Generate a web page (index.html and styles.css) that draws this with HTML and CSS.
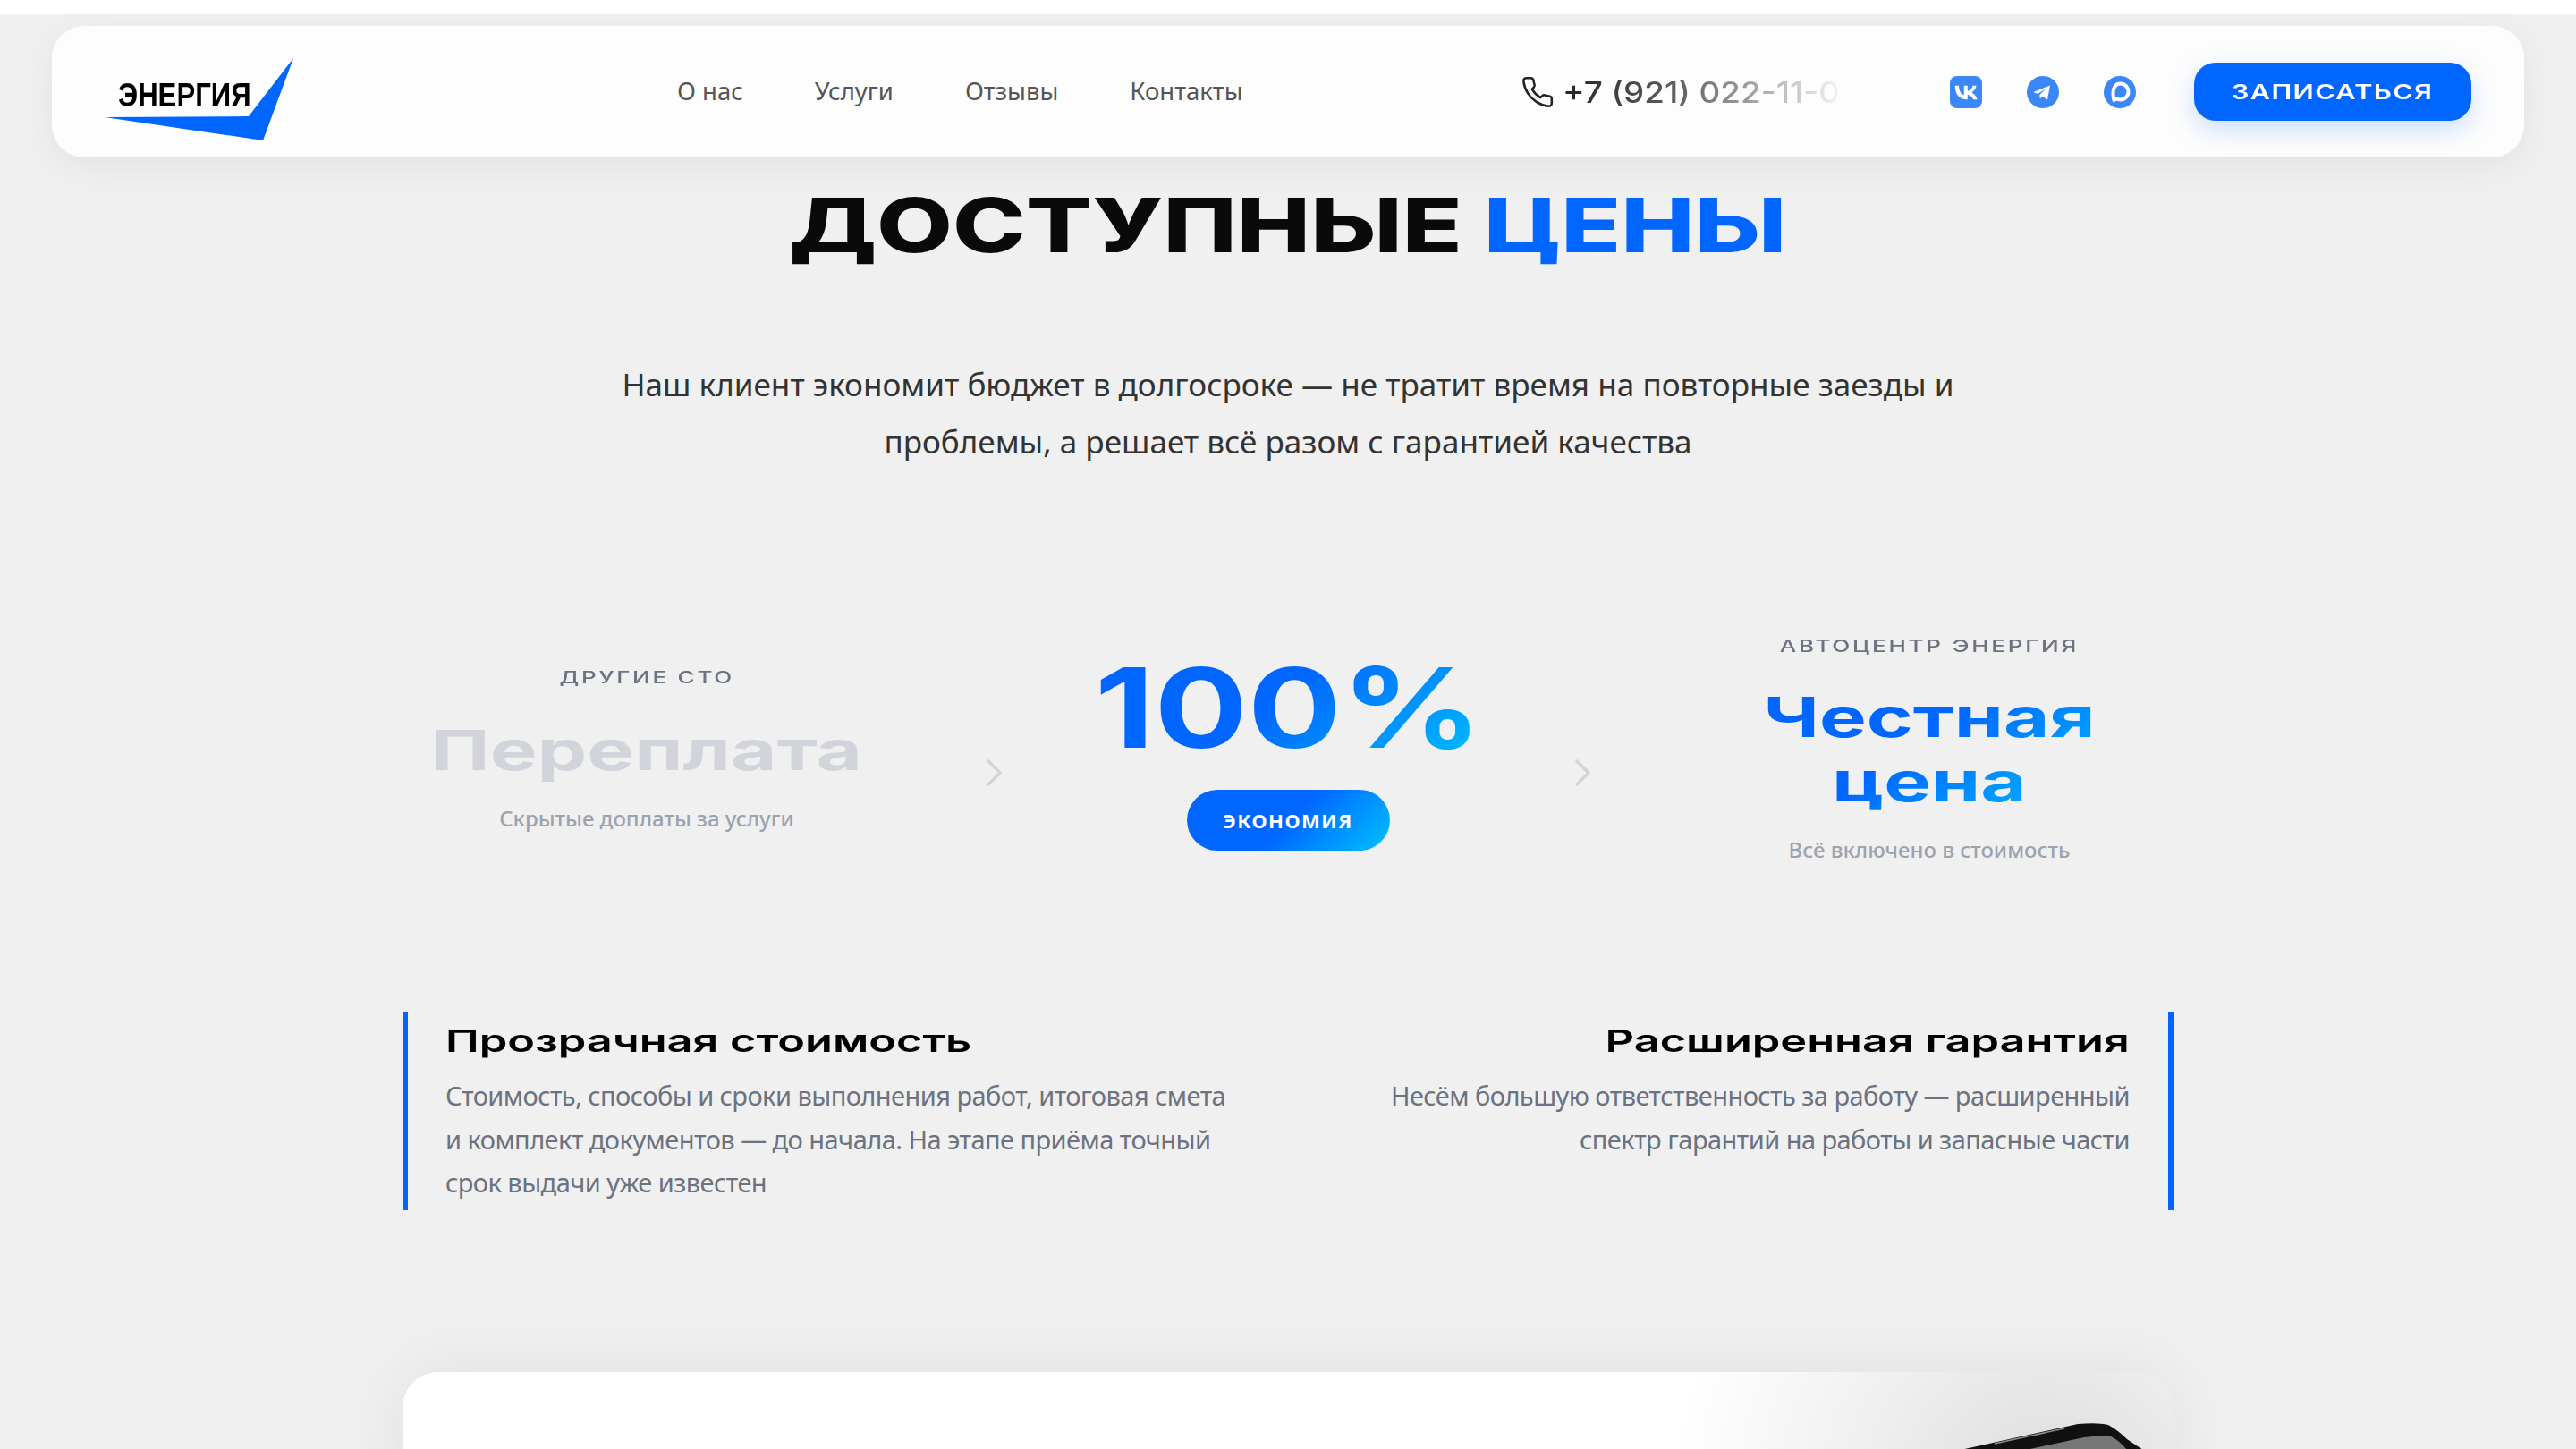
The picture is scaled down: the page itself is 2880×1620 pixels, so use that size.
FILE: index.html
```html
<!DOCTYPE html>
<html lang="ru">
<head>
    <meta charset="UTF-8" />
    <title>Энергия - Доступные цены</title>
    <link rel="stylesheet" href="styles.css">
</head>
<body>
    <div class="top-strip"></div>

    <header class="nav">
        <a class="logo">
            <svg class="logo-mark" viewBox="0 0 212 92" width="212" height="92">
                <path d="M0 66 L161 65 L211 0 L177 92 Z" fill="#0066ff"/>
            </svg>
            <span class="logo-text">ЭНЕРГИЯ</span>
        </a>
        <nav class="nav-links">
            <a>О нас</a>
            <a>Услуги</a>
            <a>Отзывы</a>
            <a>Контакты</a>
        </nav>
        <div class="nav-phone">
            <svg viewBox="0 0 24 24" width="38" height="38" fill="none" stroke="#222" stroke-width="1.6" stroke-linejoin="round">
                <path d="M22 16.92v3a2 2 0 0 1-2.18 2 19.79 19.79 0 0 1-8.63-3.07 19.5 19.5 0 0 1-6-6 19.79 19.79 0 0 1-3.07-8.67A2 2 0 0 1 4.11 2h3a2 2 0 0 1 2 1.72 12.84 12.84 0 0 0 .7 2.81 2 2 0 0 1-.45 2.11L8.09 9.91a16 16 0 0 0 6 6l1.27-1.27a2 2 0 0 1 2.11-.45 12.84 12.84 0 0 0 2.81.7A2 2 0 0 1 22 16.92z"/>
            </svg>
            <div class="phone-text"><span class="stretch phone-num">+7 (921) 022-11-0</span></div>
        </div>
        <div class="nav-social">
            <svg viewBox="0 0 36 36" width="36" height="36">
                <rect width="36" height="36" rx="8" fill="#3b87f7"/>
                <path transform="translate(-1 0) scale(1.55)" d="M13 17c-5.5 0-8.600-3.700-8.700-10h2.800c.1 4.600 2.100 6.500 3.700 6.900V7h2.600v3.900c1.600-.2 3.300-2 3.800-3.900h2.600c-.4 2.400-2.200 4.200-3.500 5 1.300.6 3.300 2.200 4.100 5h-2.900c-.6-1.900-2.100-3.300-4.100-3.500V17z" fill="#fff"/>
            </svg>
            <svg viewBox="0 0 36 36" width="36" height="36">
                <circle cx="18" cy="18" r="18" fill="#3b87f7"/>
                <path d="M7.500 18 L26 10.500 L23 26.500 L17.500 22.500 L14.800 25.500 L14.300 21 L21.500 14.300 L12 20z" fill="#fff"/>
            </svg>
            <svg viewBox="0 0 36 36" width="36" height="36">
                <circle cx="18" cy="18" r="18" fill="#3b87f7"/>
                <path d="M18.500 8.500a9 9 0 1 1 0 18c-1.500 0-2.800-.4-3.800-1.100l-3.200 1.400c-.8-1.600-1-4-1-8.500 0-5.800 3.500-9.800 8-9.800z" fill="none" stroke="#fff" stroke-width="4"/>
            </svg>
        </div>
        <a class="btn-book"><span class="stretch">ЗАПИСАТЬСЯ</span></a>
    </header>

    <main class="prices">
        <h1 class="prices-title"><span class="stretch">ДОСТУПНЫЕ <em>ЦЕНЫ</em></span></h1>
        <p class="prices-lead">Наш клиент экономит бюджет в долгосроке — не тратит время на повторные заезды и<br />проблемы, а решает всё разом с гарантией качества</p>

        <section class="compare">
            <div class="compare-col">
                <div class="compare-label"><span class="stretch">ДРУГИЕ СТО</span></div>
                <div class="compare-value muted"><span class="stretch">Переплата</span></div>
                <div class="compare-note">Скрытые доплаты за услуги</div>
            </div>
            <svg class="compare-arrow" viewBox="0 0 18 30" width="18" height="30" fill="none" stroke="#d1d5db" stroke-width="3.500"><path d="M2 1 L16 15 L2 29"/></svg>
            <div class="compare-col">
                <div class="compare-big"><span class="stretch gradient">100%</span></div>
                <div class="compare-pill">ЭКОНОМИЯ</div>
            </div>
            <svg class="compare-arrow" viewBox="0 0 18 30" width="18" height="30" fill="none" stroke="#d1d5db" stroke-width="3.500"><path d="M2 1 L16 15 L2 29"/></svg>
            <div class="compare-col">
                <div class="compare-label"><span class="stretch">АВТОЦЕНТР ЭНЕРГИЯ</span></div>
                <div class="compare-value"><span class="stretch gradient">Честная<br />цена</span></div>
                <div class="compare-note">Всё включено в стоимость</div>
            </div>
        </section>

        <section class="features">
            <div class="feature">
                <h3><span class="stretch stretch-left">Прозрачная стоимость</span></h3>
                <p>Стоимость, способы и сроки выполнения работ, итоговая смета<br />и комплект документов — до начала. На этапе приёма точный<br />срок выдачи уже известен</p>
            </div>
            <div class="feature feature-right">
                <h3><span class="stretch stretch-right">Расширенная гарантия</span></h3>
                <p>Несём большую ответственность за работу — расширенный<br />спектр гарантий на работы и запасные части</p>
            </div>
        </section>

        <section class="promo">
            <svg class="promo-phone" viewBox="0 0 230 40" width="230" height="40">
                <path d="M12 30 L143 1 Q165 -1 177 2 Q188 8 198 18 L216 30 L216 40 H12 Z" fill="#111"/>
                <path d="M85 30 L150 16 Q165 14 180 15 Q190 20 198 30 V40 H85 Z" fill="#777"/>
                <path d="M50 23 L128 6" fill="none" stroke="#8a8a8a" stroke-width="1.500"/>
            </svg>
        </section>
    </main>
</body>
</html>
```

FILE: styles.css
```css
* {
    box-sizing: border-box;
}
html, body {
    margin: 0;
    height: 1620px;
    overflow: hidden;
}
body {
    background: #f0f0f0;
    font-family: "Noto Sans", "Open Sans", sans-serif;
    color: #222;
}
.top-strip {
    height: 16px;
    background: #fff;
}

/* widened display text, the original face is an extended techno font */
.stretch {
    display: inline-block;
    font-family: "Inter", sans-serif;
    transform: scaleX(1.35);
}
.stretch-left {
    transform-origin: left center;
}
.stretch-right {
    transform-origin: right center;
}
.gradient {
    background: linear-gradient(135deg, #0066ff 45%, #00c2ff 100%);
    -webkit-background-clip: text;
    background-clip: text;
    color: transparent;
}

.nav {
    display: flex;
    align-items: center;
    height: 147px;
    margin: 13px 58px 0;
    padding: 0 59px;
    background: #fdfdfd;
    border-radius: 36px;
    box-shadow: 0 10px 40px rgba(0, 0, 0, 0.06);
}
.logo {
    position: relative;
    display: block;
    flex: none;
    width: 212px;
    height: 92px;
    margin-top: 17px;
}
.logo-mark {
    display: block;
}
.logo-text {
    position: absolute;
    left: 15px;
    top: 19px;
    font-family: "Liberation Sans", sans-serif;
    font-weight: 700;
    font-size: 37.500px;
    line-height: 44px;
    color: #000;
    white-space: nowrap;
    transform: scaleX(0.83);
    transform-origin: left center;
}
.nav-links {
    display: flex;
    flex: none;
    gap: 80px;
    margin-left: 428px;
    padding-bottom: 2px;
    font-size: 27.500px;
    color: #555;
    white-space: nowrap;
}
.nav-phone {
    display: flex;
    flex: none;
    align-items: center;
    gap: 9px;
    margin-left: 310px;
}
.phone-text {
    width: 308px;
    font-size: 32px;
    font-weight: 500;
    white-space: nowrap;
}
.phone-num {
    background: linear-gradient(90deg, #222 0%, #666 45%, #f4f4f4 100%);
    -webkit-background-clip: text;
    background-clip: text;
    color: transparent;
    transform: scaleX(1.15);
    transform-origin: left center;
}
.nav-social {
    display: flex;
    flex: none;
    gap: 50px;
    margin-left: 125px;
}
.btn-book {
    display: flex;
    flex: none;
    align-items: center;
    justify-content: center;
    width: 310px;
    height: 65px;
    margin-left: 65px;
    background: #0066ff;
    border-radius: 24px;
    box-shadow: 0 10px 30px rgba(0, 102, 255, 0.2);
    color: #fff;
    font-size: 23px;
    font-weight: 600;
    letter-spacing: 1px;
}
.btn-book .stretch {
    transform: scaleX(1.33);
}

.prices {
    width: 1980px;
    margin: 0 auto;
    text-align: center;
}
.prices-title {
    margin: 19px 0 0;
    font-size: 84px;
    line-height: 110px;
    font-weight: 800;
    color: #0a0a0a;
    white-space: nowrap;
}
.prices-title .stretch {
    transform: scaleX(1.309);
}
.prices-title em {
    font-style: normal;
    color: #0066ff;
}
.prices-lead {
    margin: 90px 0 0;
    font-size: 35.100px;
    line-height: 64px;
    color: #333;
}

.compare {
    display: grid;
    grid-template-columns: 546px 18px 1fr 18px 546px;
    column-gap: 106px;
    align-items: center;
    margin-top: 184px;
}
.compare-arrow {
    margin-top: 52px;
}
.compare-label {
    font-size: 19px;
    font-weight: 500;
    letter-spacing: 2px;
    color: #6b7280;
}
.compare-label .stretch {
    transform: scaleX(1.37);
}
.compare-value {
    margin-top: 31px;
    font-size: 62px;
    line-height: 72px;
    font-weight: 700;
    white-space: nowrap;
}
.compare-value .stretch {
    transform: scaleX(1.43);
}
.compare-value.muted {
    color: #d1d5db;
}
.compare-note {
    margin-top: 23px;
    font-size: 24px;
    font-weight: 500;
    color: #9ca3af;
}
.compare-big {
    margin-top: -7px;
    font-size: 124px;
    line-height: 140px;
    font-weight: 700;
}
.compare-big .stretch {
    transform: scaleX(1.25);
}
.compare-pill {
    width: 227px;
    height: 68px;
    margin: 22px auto 0;
    border-radius: 34px;
    background: linear-gradient(135deg, #0066ff 50%, #00c2ff 100%);
    color: #fff;
    font-size: 22px;
    font-weight: 700;
    letter-spacing: 1.500px;
    line-height: 68px;
}

.features {
    display: flex;
    justify-content: space-between;
    margin-top: 165px;
    text-align: left;
}
.feature {
    width: 960px;
    height: 222px;
    padding: 8px 0 0 42px;
    border-left: 6px solid #0066ff;
}
.feature-right {
    padding: 8px 43px 0 0;
    border-left: 0;
    border-right: 6px solid #0066ff;
    text-align: right;
}
.feature h3 {
    margin: 0;
    font-size: 34px;
    line-height: 48px;
    font-weight: 600;
    color: #000;
    white-space: nowrap;
}
.feature h3 .stretch {
    transform: scaleX(1.485);
}
.feature p {
    margin: 13px 0 0;
    font-size: 29px;
    letter-spacing: -0.550px;
    line-height: 48.500px;
    color: #6b7280;
    white-space: nowrap;
}

.promo {
    position: relative;
    height: 500px;
    margin-top: 181px;
    background: radial-gradient(circle 420px at 1840px 140px, #dcdcdc 0%, #efefef 50%, #fff 100%);
    border-radius: 40px;
    box-shadow: 0 0 80px rgba(0, 0, 0, 0.07);
}
.promo-phone {
    position: absolute;
    top: 57px;
    right: 20px;
}
```
